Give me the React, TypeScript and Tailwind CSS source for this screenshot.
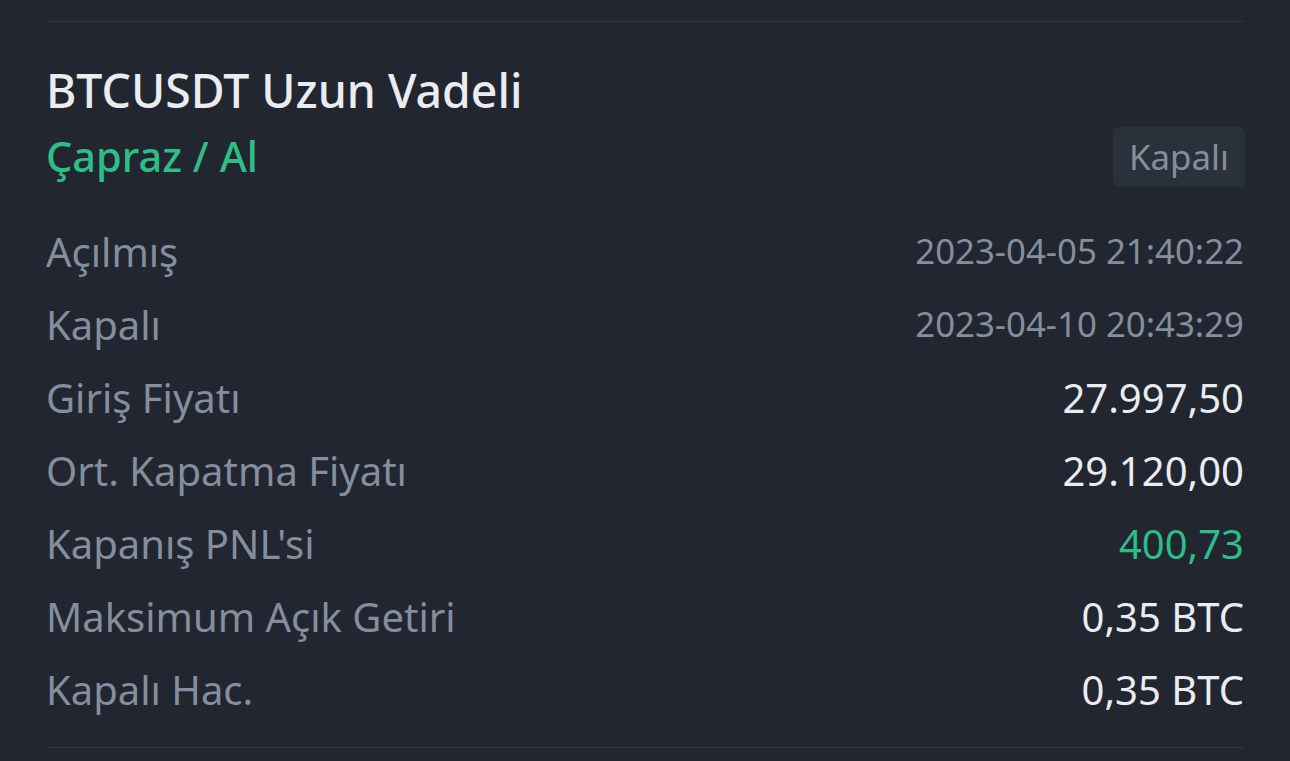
import React from 'react';

const rows = [
  { label: 'Açılmış', value: '2023-04-05 21:40:22', kind: 'date' },
  { label: 'Kapalı', value: '2023-04-10 20:43:29', kind: 'date' },
  { label: 'Giriş Fiyatı', value: '27.997,50', kind: 'num' },
  { label: 'Ort. Kapatma Fiyatı', value: '29.120,00', kind: 'num' },
  { label: "Kapanış PNL'si", value: '400,73', kind: 'pnl' },
  { label: 'Maksimum Açık Getiri', value: '0,35 BTC', kind: 'num' },
  { label: 'Kapalı Hac.', value: '0,35 BTC', kind: 'num' },
];

const valueClass: Record<string, string> = {
  date: 'text-[34.8px] text-[#848e9c]',
  num: 'text-[40px] text-[#eaecef]',
  pnl: 'text-[40px] text-[#2ebd85]',
};

export default function App() {
  return (
    <div
      className="w-[1290px] h-[761px] bg-[#222630] px-[46px] overflow-hidden"
      style={{ fontFamily: '"Noto Sans", Roboto, sans-serif' }}
    >
      <div className="pt-[21px] border-b border-[#2f343e]" />
      <div className="pt-[38px]">
        <h1 className="text-[46.4px] leading-[60px] font-medium text-[#eaecef]">BTCUSDT Uzun Vadeli</h1>
        <div className="flex items-start justify-between">
          <span className="mt-[8px] text-[41.5px] leading-[56px] font-medium text-[#2ebd85]">Çapraz / Al</span>
          <span className="mt-[7px] -mr-[1px] h-[60px] px-[16px] flex items-center rounded-[6px] bg-[#2b313a] text-[34.8px] text-[#848e9c]">
            Kapalı
          </span>
        </div>
      </div>
      <div className="mt-[28px] flex flex-col">
        {rows.map((r) => (
          <div key={r.label} className="h-[73px] flex items-center justify-between">
            <span className="text-[40px] text-[#848e9c]">{r.label}</span>
            <span className={valueClass[r.kind]}>{r.value}</span>
          </div>
        ))}
      </div>
      <div className="mt-[21px] border-b border-[#2f343e]" />
    </div>
  );
}
